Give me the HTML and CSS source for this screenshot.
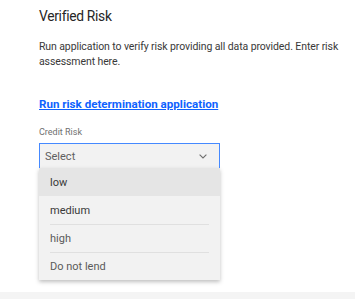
FILE: index.html
```html
<!DOCTYPE html>
<html>
<head>
<meta charset="utf-8">
<link rel="stylesheet" href="styles.css">
</head>
<body>
<main class="page">
  <section class="panel">
    <h2 class="title">Verified Risk</h2>
    <p class="desc">Run application to verify risk providing all data provided. Enter risk assessment here.</p>
    <a class="run-link" href="#">Run risk determination application</a>
    <div class="field">
      <label class="field-label">Credit Risk</label>
      <div class="select-wrap">
        <div class="select">
          <span class="select-value">Select</span>
          <svg class="chevron" width="8" height="5" viewBox="0 0 8 5"><path d="M0.6 0.6 L4 4 L7.4 0.6" fill="none" stroke="#6f6f6f" stroke-width="1.1"/></svg>
        </div>
        <ul class="menu">
          <li class="menu-item active"><span>low</span></li>
          <li class="menu-item"><span>medium</span></li>
          <li class="menu-item"><span>high</span></li>
          <li class="menu-item"><span>Do not lend</span></li>
        </ul>
      </div>
    </div>
  </section>
  <div class="footer-bar"></div>
</main>
</body>
</html>
```
FILE: styles.css
```css
html, body {
  margin: 0;
  padding: 0;
  background: #ffffff;
}
body {
  font-family: Roboto, "Noto Sans", Arial, sans-serif;
  color: #161616;
}
.page {
  width: 355px;
  height: 299px;
  overflow: hidden;
  display: flex;
  flex-direction: column;
}
.panel {
  padding: 6px 0 0 39px;
  height: 286px;
  box-sizing: border-box;
}
.title {
  margin: 0;
  font-size: 13.8px;
  line-height: 20px;
  font-weight: 400;
  letter-spacing: -0.3px;
  color: #262626;
}
.desc {
  margin: 13px 0 0;
  font-size: 10.5px;
  line-height: 15px;
  letter-spacing: -0.1px;
  color: #393939;
  width: 310px;
}
.run-link {
  display: inline-block;
  margin-top: 27px;
  font-size: 11.6px;
  line-height: 16px;
  font-weight: 700;
  color: #0f62fe;
  text-decoration: underline;
}
.field {
  margin-top: 14px;
}
.field-label {
  display: block;
  font-size: 9px;
  line-height: 12px;
  color: #6f6f6f;
  margin-bottom: 5px;
}
.select-wrap {
  position: relative;
  width: 181px;
}
.select {
  height: 25px;
  box-sizing: border-box;
  border: 1px solid #4589ff;
  border-bottom: none;
  background: #f2f2f2;
  display: flex;
  align-items: center;
  justify-content: space-between;
  padding: 0 12px 0 5px;
}
.select-value {
  font-size: 11px;
  color: #5f5f5f;
}
.chevron {
  display: block;
}
.menu {
  position: absolute;
  left: 0;
  top: 25px;
  width: 181px;
  margin: 0;
  padding: 0;
  list-style: none;
  background: #f2f2f2;
  box-shadow: 0 2px 4px rgba(0, 0, 0, 0.25);
}
.menu-item {
  height: 28px;
  padding: 0 11px;
  box-sizing: border-box;
}
.menu-item span {
  display: flex;
  align-items: center;
  height: 28px;
  font-size: 11px;
  color: #5a5a5a;
  box-sizing: border-box;
}
.menu-item + .menu-item span {
  border-top: 1px solid #e0e0e0;
}
.menu-item.active {
  background: #e5e5e5;
}
.menu-item.active span,
.menu-item.active + .menu-item span {
  border-top-color: transparent;
  color: #393939;
}
.footer-bar {
  margin-top: 6px;
  height: 7px;
  background: #f4f4f4;
}
```
